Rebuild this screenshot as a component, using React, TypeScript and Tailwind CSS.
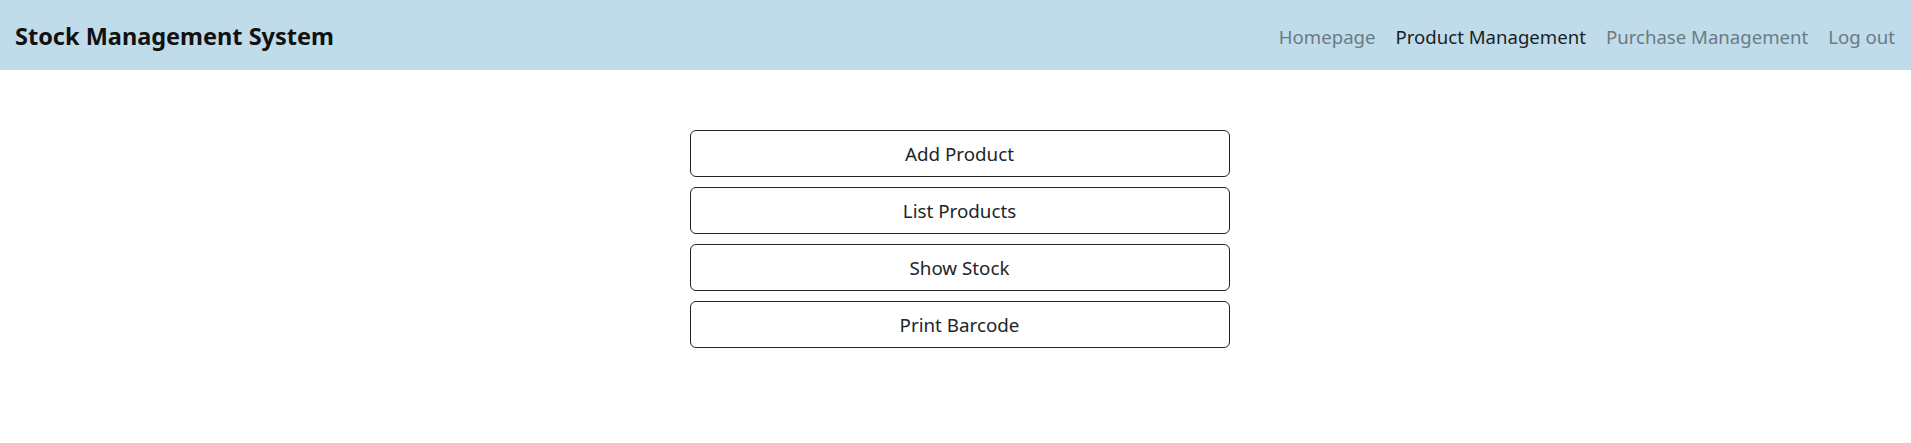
const links = [
  { label: 'Homepage', active: false },
  { label: 'Product Management', active: true },
  { label: 'Purchase Management', active: false },
  { label: 'Log out', active: false },
];

const actions = ['Add Product', 'List Products', 'Show Stock', 'Print Barcode'];

export default function App() {
  return (
    <div className="min-h-screen bg-white font-['Noto_Sans',sans-serif] text-[#212529]">
      <nav className="h-[70px] bg-[#c0dcea] flex items-center justify-between pl-[15px] pr-[16px] pt-[3px]">
        <a href="#" className="text-[23.5px] font-bold text-[#111]">
          Stock Management System
        </a>
        <ul className="flex items-center gap-[20px]">
          {links.map((l) => (
            <li key={l.label}>
              <a
                href="#"
                className={
                  l.active
                    ? 'text-[18.6px] text-[#1a1f24]'
                    : 'text-[18.6px] text-[#6b7a84]'
                }
              >
                {l.label}
              </a>
            </li>
          ))}
        </ul>
      </nav>

      <main className="flex justify-center pl-2 pt-[60px]">
        <div className="w-[540px] flex flex-col gap-[10px]">
          {actions.map((a) => (
            <button
              key={a}
              className="h-[47px] w-full rounded-[6px] border border-[#212529] bg-white pt-[2px] text-[18.8px] text-[#212529] hover:bg-[#212529] hover:text-white transition-colors"
            >
              {a}
            </button>
          ))}
        </div>
      </main>
    </div>
  );
}
